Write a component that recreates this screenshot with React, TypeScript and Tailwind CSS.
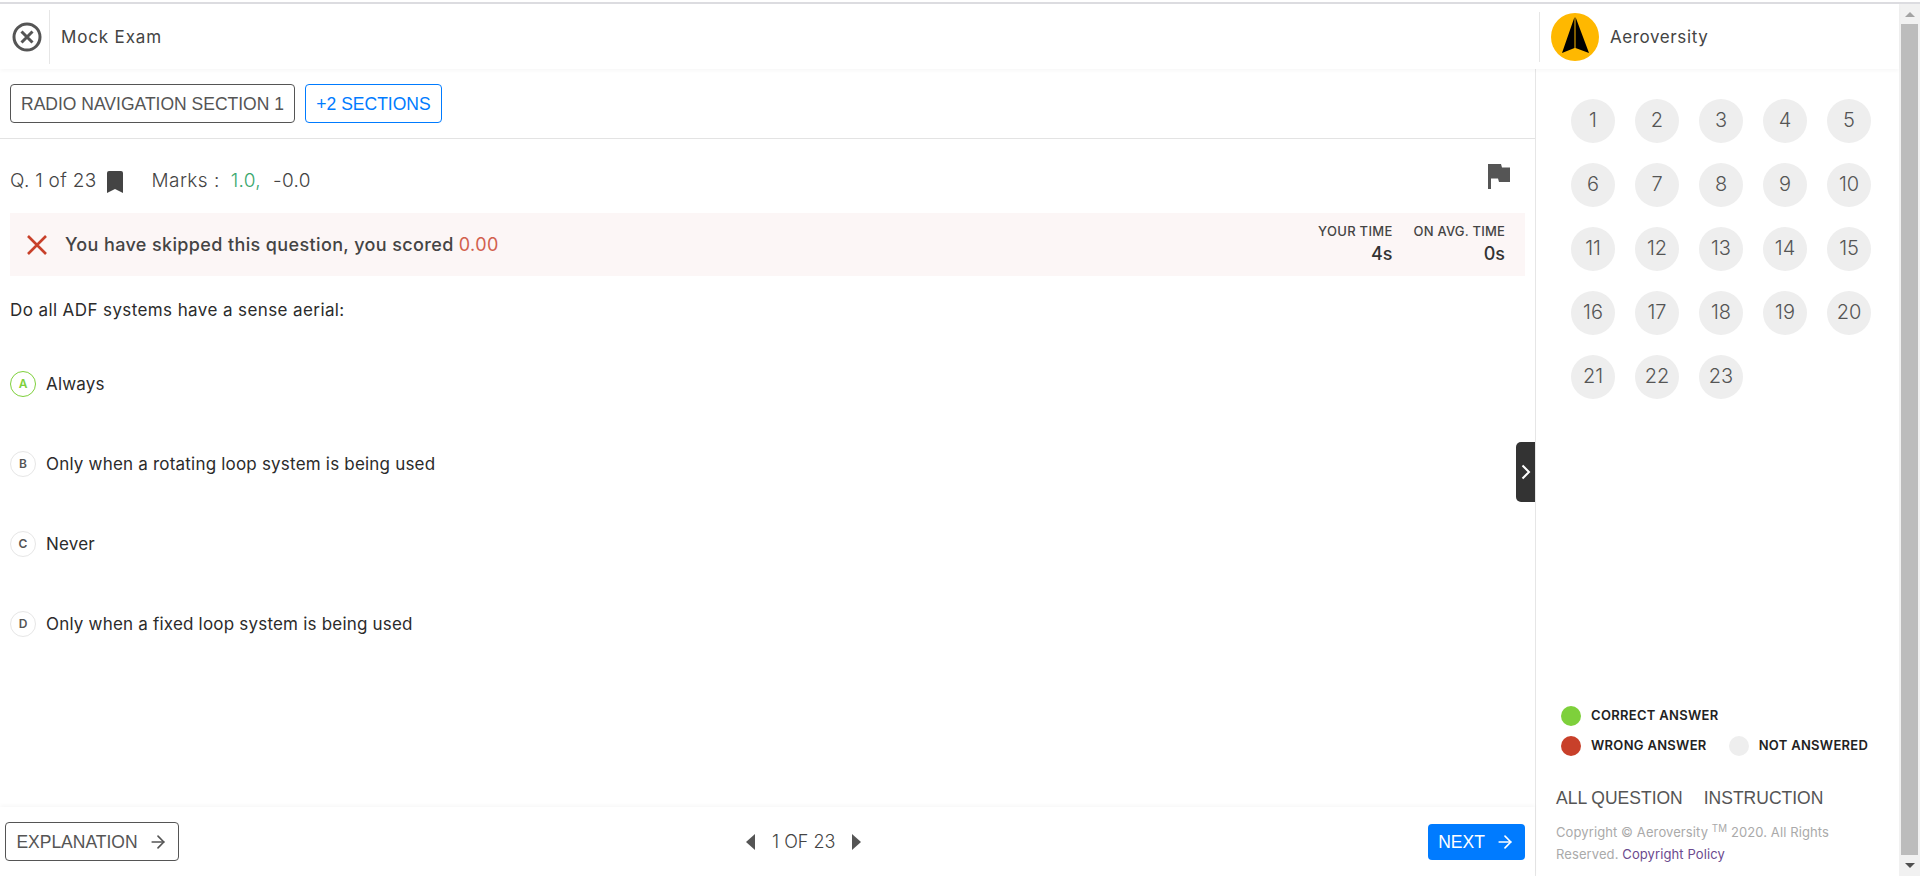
import { ArrowRight } from 'lucide-react';

const QUESTIONS = Array.from({ length: 23 }, (_, i) => i + 1);
const OPTIONS = [
  { key: 'A', text: 'Always', active: true },
  { key: 'B', text: 'Only when a rotating loop system is being used' },
  { key: 'C', text: 'Never' },
  { key: 'D', text: 'Only when a fixed loop system is being used' },
];

function CloseCircle() {
  return (
    <svg width="30" height="30" viewBox="0 0 30 30" fill="none" stroke="#555" strokeWidth="3">
      <circle cx="15" cy="15" r="13" />
      <path d="M9.5 9.5l11 11M20.5 9.5l-11 11" />
    </svg>
  );
}

function Logo() {
  return (
    <svg width="48" height="48" viewBox="0 0 48 48">
      <circle cx="24" cy="24" r="24" fill="#ffb800" />
      <path d="M23.5 4L11 40l12.5-5zM24.5 4L38 40l-13.5-5z" fill="#000" />
    </svg>
  );
}

function Legend({ color, label }: { color: string; label: string }) {
  return (
    <div className="flex items-center gap-[10px]">
      <span className={`w-5 h-5 rounded-full ${color}`} />
      <span className="text-[13px] font-semibold text-[#222] tracking-[0.3px]">{label}</span>
    </div>
  );
}

export default function App() {
  return (
    <div className="h-[881px] w-[1920px] overflow-hidden bg-white flex flex-col relative font-['Inter',sans-serif]">
      <div className="h-[2px] bg-white" />
      <div className="h-[2px] bg-[#dcdce0]" />
      <div className="flex flex-1 min-h-0 pb-[5px]">
        <div className="flex-1 flex flex-col min-w-0">
          {/* header */}
          <header className="h-[65px] shrink-0 flex items-center shadow-[0_2px_4px_rgba(0,0,0,0.03)] relative z-10">
            <div className="w-[49px] flex justify-center pl-[5px]">
              <CloseCircle />
            </div>
            <div className="h-[54px] w-px bg-[#e6e6e6]" />
            <span className="ml-[11px] pt-[2px] text-[17px] text-[#444] tracking-[0.85px]">Mock Exam</span>
            <div className="ml-auto h-[50px] w-px bg-[#e6e6e6]" />
            <div className="w-[359px] flex items-center pl-[11px] gap-[11px]">
              <Logo />
              <span className="pt-[2px] text-[17px] text-[#444] tracking-[0.6px]">Aeroversity</span>
            </div>
          </header>

          <div className="flex flex-1 min-h-0">
            {/* main */}
            <main className="w-[1536px] shrink-0 border-r border-[#e6e6e6] flex flex-col relative">
              <div className="h-[70px] shrink-0 border-b border-[#e3e3e3] flex items-start gap-[10px] pt-[15px] pl-[10px] font-['Liberation_Sans',sans-serif]">
                <button className="h-[39px] w-[285px] pt-[2px] rounded-[4px] border border-[#555] text-[17.5px] text-[#555]">
                  RADIO NAVIGATION SECTION 1
                </button>
                <button className="h-[39px] w-[137px] pt-[2px] rounded-[4px] border border-[#007bff] text-[17.5px] text-[#007bff]">
                  +2 SECTIONS
                </button>
              </div>

              <div className="flex-1 px-[10px]">
                <div className="h-[74px] pt-[11px] flex items-center pr-[15px]">
                  <span className="text-[19px] font-light text-[#444] tracking-[0.3px]">Q. 1 of 23</span>
                  <svg className="ml-[10px]" width="18" height="22" viewBox="0 0 18 22">
                    <path d="M1 2a2 2 0 0 1 2-2h12a2 2 0 0 1 2 2v20l-8-4-8 4z" fill="#444" />
                  </svg>
                  <span className="ml-[27px] text-[19px] font-light text-[#444] tracking-[0.45px]">Marks :</span>
                  <span className="ml-[11px] text-[19px] font-light text-[#3aa76d] tracking-[0.3px]">1.0,</span>
                  <span className="ml-[12px] text-[19px] font-light text-[#444] tracking-[0.4px]">-0.0</span>
                  <svg className="ml-auto -mt-[10px]" width="22" height="25" viewBox="0 0 22 25">
                    <path d="M0 0h13l1 3.5h8V18H11l-1-3.5H3V25H0z" fill="#555" />
                  </svg>
                </div>

                <div className="h-[63px] w-[1515px] bg-[#fcf6f6] flex items-center pl-[17px] pr-[20px]">
                  <svg width="20" height="20" viewBox="0 0 20 20" fill="none" stroke="#c8402a" strokeWidth="2.6">
                    <path d="M1 1l18 18M19 1L1 19" />
                  </svg>
                  <span className="ml-[18px] text-[18px] font-medium text-[#444] tracking-[0.37px]">
                    You have skipped this question, you scored <span className="font-normal text-[#d2604d]">0.00</span>
                  </span>
                  <div className="ml-auto flex gap-[21px] text-right -mt-[1px]">
                    <div>
                      <div className="text-[13px] font-medium text-[#444] leading-[19px] tracking-[0.3px]">YOUR TIME</div>
                      <div className="text-[18px] font-medium text-[#333] leading-[25px]">4s</div>
                    </div>
                    <div>
                      <div className="text-[13px] font-medium text-[#444] leading-[19px] tracking-[0.2px]">ON AVG. TIME</div>
                      <div className="text-[18px] font-medium text-[#333] leading-[25px]">0s</div>
                    </div>
                  </div>
                </div>

                <p className="mt-[22px] text-[17px] leading-[24px] text-[#2b2b2b] tracking-[0.4px]">Do all ADF systems have a sense aerial:</p>

                <div className="mt-[49px] flex flex-col gap-[54px]">
                  {OPTIONS.map(o => (
                    <div key={o.key} className="flex items-center h-[26px] gap-[10px]">
                      <span
                        className={`w-[26px] h-[26px] rounded-full border flex items-center justify-center text-[12px] font-semibold ${
                          o.active ? 'border-[#7ed03b] text-[#7ed03b]' : 'border-[#e6e6e6] text-[#555]'
                        }`}
                      >
                        {o.key}
                      </span>
                      <span className="pt-[1px] text-[17px] text-[#2b2b2b] tracking-[0.2px]">{o.text}</span>
                    </div>
                  ))}
                </div>
              </div>

              {/* bottom bar */}
              <div className="h-[69px] shrink-0 shadow-[0_-2px_4px_rgba(0,0,0,0.03)] flex items-center justify-between pl-[5px] pr-[10px] relative font-['Liberation_Sans',sans-serif]">
                <button className="h-[39px] w-[174px] rounded-[4px] border border-[#555] text-[17.5px] text-[#555] flex items-center justify-center gap-[10px]">
                  <span className="pt-[1px]">EXPLANATION</span> <ArrowRight size={20} />
                </button>
                <div className="absolute left-[746px] top-0 h-full flex items-center gap-[17px]">
                  <svg width="9" height="16" viewBox="0 0 9 16"><path d="M9 0L0 8l9 8z" fill="#555" /></svg>
                  <span className="text-[18px] font-light text-[#444] font-['Inter',sans-serif] whitespace-nowrap">1 OF 23</span>
                  <svg width="9" height="16" viewBox="0 0 9 16"><path d="M0 0l9 8-9 8z" fill="#555" /></svg>
                </div>
                <button className="h-[36px] w-[97px] rounded-[4px] bg-[#007bff] text-[17.5px] text-white flex items-center justify-center gap-[10px]">
                  <span className="pt-[1px]">NEXT</span> <ArrowRight size={20} />
                </button>
              </div>

              <div className="absolute right-0 top-[373px] w-[19px] h-[60px] bg-[#333] rounded-l-[5px] flex items-center justify-center">
                <svg width="10" height="16" viewBox="0 0 10 16" fill="none" stroke="#fff" strokeWidth="2">
                  <path d="M1.5 1.5L8 8l-6.5 6.5" />
                </svg>
              </div>
            </main>

            {/* sidebar */}
            <aside className="flex-1 flex flex-col min-w-0 pl-[20px]">
              <div className="mt-[30px] ml-[15px] grid grid-cols-[repeat(5,44px)] auto-rows-[44px] gap-x-[20px] gap-y-[20px]">
                {QUESTIONS.map(n => (
                  <span key={n} className="rounded-full bg-[#eee] flex items-center justify-center pb-[2px] text-[20px] font-light text-[#555]">
                    {n}
                  </span>
                ))}
              </div>
              <div className="mt-auto ml-[5px] flex flex-col gap-[10px]">
                <Legend color="bg-[#7ed03b]" label="CORRECT ANSWER" />
                <div className="flex gap-[22px]">
                  <Legend color="bg-[#c8402a]" label="WRONG ANSWER" />
                  <Legend color="bg-[#eee]" label="NOT ANSWERED" />
                </div>
              </div>
              <div className="mt-[29px] flex gap-[21px] text-[17.5px] leading-[27px] text-[#555] font-['Liberation_Sans',sans-serif]">
                <span>ALL QUESTION</span>
                <span>INSTRUCTION</span>
              </div>
              <p className="mt-[9px] mb-[11px] text-[13px] leading-[22px] text-[#aaa] w-[300px] tracking-[0.1px]">
                Copyright © Aeroversity <sup className="leading-none">TM</sup> 2020. All Rights Reserved. <span className="text-[#6b4a8e]">Copyright Policy</span>
              </p>
            </aside>
          </div>
        </div>

        {/* scrollbar */}
        <div className="w-[21px] shrink-0 bg-[#f1f1f1] flex flex-col items-center px-[2px]">
          <div className="h-[20px] flex items-center">
            <div className="w-0 h-0 border-x-[5px] border-x-transparent border-b-[5px] border-b-[#a3a3a3]" />
          </div>
          <div className="flex-1 w-full bg-[#bcbcbc]" />
          <div className="h-[21px] flex items-center">
            <div className="w-0 h-0 border-x-[5px] border-x-transparent border-t-[5px] border-t-[#505050]" />
          </div>
        </div>
      </div>
    </div>
  );
}
